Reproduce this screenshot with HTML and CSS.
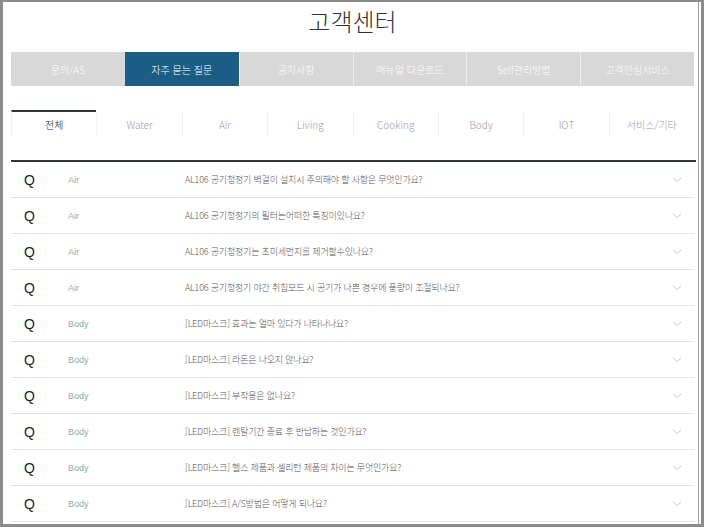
FILE: index.html
```html
<!DOCTYPE html>
<html lang="ko">
<head>
    <meta charset="UTF-8">
    <meta name="viewport" content="width=device-width, initial-scale=1.0">
    <title>고객센터</title>
    <link rel="stylesheet" href="styles.css">
</head>
<body>
    <div class="frame">
        <h1 class="title">고객센터</h1>

        <ul class="main-tabs">
            <li>문의/AS</li>
            <li class="active">자주 묻는 질문</li>
            <li>공지사항</li>
            <li>매뉴얼 다운로드</li>
            <li>Self관리방법</li>
            <li>고객안심서비스</li>
        </ul>

        <ul class="cat-tabs">
            <li class="active">전체</li>
            <li>Water</li>
            <li>Air</li>
            <li>Living</li>
            <li>Cooking</li>
            <li>Body</li>
            <li>IOT</li>
            <li>서비스/기타</li>
        </ul>

        <div class="faq-list" id="faqList"></div>
    </div>

    <script>
        const faqs = [
            ['Air', 'AL106 공기청정기 벽걸이 설치시 주의해야 할 사항은 무엇인가요?'],
            ['Air', 'AL106 공기청정기의 필터는어떠한 특징이있나요?'],
            ['Air', 'AL106 공기청정기는 초미세먼지를 제거할수있나요?'],
            ['Air', 'AL106 공기청정기 야간 취침모드 시 공기가 나쁜 경우에 풍량이 조절되나요?'],
            ['Body', '[LED마스크] 효과는 얼마 있다가 나타나나요?'],
            ['Body', '[LED마스크] 라돈은 나오지 않나요?'],
            ['Body', '[LED마스크] 부작용은 없나요?'],
            ['Body', '[LED마스크] 렌탈기간 종료 후 반납하는 것인가요?'],
            ['Body', '[LED마스크] 헬스 제품과 셀리턴 제품의 차이는 무엇인가요?'],
            ['Body', '[LED마스크] A/S방법은 어떻게 되나요?']
        ];

        const listElem = document.getElementById('faqList');

        faqs.forEach(([cat, question]) => {
            const row = document.createElement('div');
            row.className = 'faq-row';
            row.innerHTML =
                '<span class="q">Q</span>' +
                '<span class="cat">' + cat + '</span>' +
                '<span class="question">' + question + '</span>' +
                '<svg class="chevron" width="10" height="6" viewBox="0 0 10 6">' +
                '<path d="M1 1 L5 4.5 L9 1" fill="none" stroke="#c8c8c8" stroke-width="1"/></svg>';
            listElem.appendChild(row);
        });
    </script>
</body>
</html>
```

FILE: styles.css
```css
* {
    box-sizing: border-box;
}

html, body {
    margin: 0;
    padding: 0;
    background-color: #fff;
}

body {
    font-family: "Noto Sans CJK KR", "Noto Sans", sans-serif;
    color: #333;
}

.frame {
    height: 527px;
    border: 3px solid #8c8c8c;
    border-top-width: 2px;
    border-right-width: 3px;
    box-shadow: inset -2px 0 0 #fff, inset -3px 0 0 #a0a0a0;
    padding: 0 7px 0 8px;
    overflow: hidden;
}

.title {
    margin: 0;
    height: 50px;
    padding-top: 2px;
    text-align: center;
    font-size: 24px;
    font-weight: 300;
    line-height: 34px;
    color: #333;
}

.main-tabs {
    list-style: none;
    margin: 0;
    padding: 0;
    display: grid;
    grid-template-columns: repeat(6, 1fr);
    width: 683px;
    height: 34px;
    background-color: #d8d8d8;
}

.main-tabs li {
    display: flex;
    align-items: center;
    justify-content: center;
    font-size: 10px;
    font-weight: 300;
    color: #fff;
    border-left: 1px solid #eee;
}

.main-tabs li:first-child {
    border-left: none;
}

.main-tabs li.active {
    background-color: #1b5d84;
    border-left: none;
}

.cat-tabs {
    list-style: none;
    margin: 24px 0 0;
    padding: 0;
    display: grid;
    grid-template-columns: repeat(8, 1fr);
    width: 683px;
    height: 26px;
}

.cat-tabs li {
    display: flex;
    align-items: center;
    justify-content: center;
    font-size: 10px;
    font-weight: 300;
    color: #9a9a9a;
    border-left: 1px solid #f0f0f0;
    margin-top: 2px;
}

.cat-tabs li.active {
    color: #222;
    border-top: 2px solid #2c3838;
    margin-top: 0;
}

.faq-list {
    margin-top: 24px;
    width: 685px;
    border-top: 2px solid #2a3838;
}

.faq-row {
    display: grid;
    grid-template-columns: 57px 117px 1fr 40px;
    align-items: center;
    height: 36px;
    width: 683px;
    border-bottom: 1px solid #e4e4e4;
}

.q {
    padding-left: 13px;
    font-family: "Liberation Sans", Arial, sans-serif;
    font-size: 14px;
    color: #222;
}

.cat {
    font-family: "Liberation Sans", Arial, sans-serif;
    font-size: 9px;
    color: #86afaf;
}

.question {
    font-size: 9px;
    font-weight: 300;
    letter-spacing: -0.2px;
    color: #555;
    white-space: nowrap;
}

.chevron {
    justify-self: center;
    margin-left: 6px;
}
```
